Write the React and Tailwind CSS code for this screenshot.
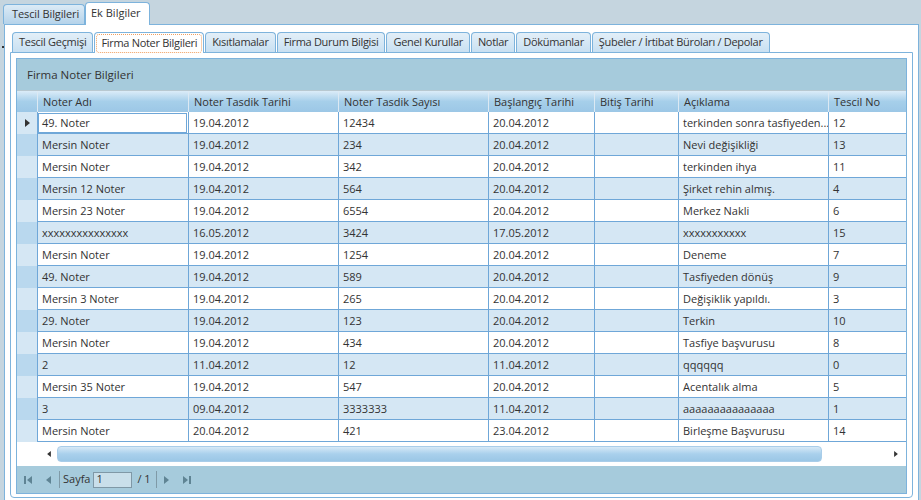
import React from "react";

const font = { fontFamily: "'Open Sans', 'Noto Sans', sans-serif" };

const columns = [
    { label: "Noter Adı", w: "w-[151px]" },
    { label: "Noter Tasdik Tarihi", w: "w-[150px]" },
    { label: "Noter Tasdik Sayısı", w: "w-[150px]" },
    { label: "Başlangıç Tarihi", w: "w-[106px]" },
    { label: "Bitiş Tarihi", w: "w-[84px]" },
    { label: "Açıklama", w: "w-[150px]" },
    { label: "Tescil No", w: "w-[78px]" },
];

const rows = [
    ["49. Noter", "19.04.2012", "12434", "20.04.2012", "", "terkinden sonra tasfiyeden...", "12"],
    ["Mersin Noter", "19.04.2012", "234", "20.04.2012", "", "Nevi değişikliği", "13"],
    ["Mersin Noter", "19.04.2012", "342", "20.04.2012", "", "terkinden ihya", "11"],
    ["Mersin 12 Noter", "19.04.2012", "564", "20.04.2012", "", "Şirket rehin almış.", "4"],
    ["Mersin 23 Noter", "19.04.2012", "6554", "20.04.2012", "", "Merkez Nakli", "6"],
    ["xxxxxxxxxxxxxxx", "16.05.2012", "3424", "17.05.2012", "", "xxxxxxxxxxx", "15"],
    ["Mersin Noter", "19.04.2012", "1254", "20.04.2012", "", "Deneme", "7"],
    ["49. Noter", "19.04.2012", "589", "20.04.2012", "", "Tasfiyeden dönüş", "9"],
    ["Mersin 3 Noter", "19.04.2012", "265", "20.04.2012", "", "Değişiklik yapıldı.", "3"],
    ["29. Noter", "19.04.2012", "123", "20.04.2012", "", "Terkin", "10"],
    ["Mersin Noter", "19.04.2012", "434", "20.04.2012", "", "Tasfiye başvurusu", "8"],
    ["2", "11.04.2012", "12", "11.04.2012", "", "qqqqqq", "0"],
    ["Mersin 35 Noter", "19.04.2012", "547", "20.04.2012", "", "Acentalık alma", "5"],
    ["3", "09.04.2012", "3333333", "11.04.2012", "", "aaaaaaaaaaaaaaa", "1"],
    ["Mersin Noter", "20.04.2012", "421", "23.04.2012", "", "Birleşme Başvurusu", "14"],
];

const innerTabs = [
    "Tescil Geçmişi",
    "Firma Noter Bilgileri",
    "Kısıtlamalar",
    "Firma Durum Bilgisi",
    "Genel Kurullar",
    "Notlar",
    "Dökümanlar",
    "Şubeler / İrtibat Büroları / Depolar",
];

function Tri({ dir = "right", className = "" }) {
    const d = dir === "right" ? "M0 0 L5 4 L0 8 Z" : "M5 0 L0 4 L5 8 Z";
    return (
        <svg width="5" height="8" viewBox="0 0 5 8" className={className}>
            <path d={d} fill="currentColor" />
        </svg>
    );
}

function PagerIcon({ kind }) {
    return (
        <svg width="9" height="10" viewBox="0 0 9 10" className="text-[#5f8494]">
            {kind === "first" && <><rect x="0" y="1" width="2" height="8" fill="currentColor" /><path d="M8 1 L3 5 L8 9 Z" fill="currentColor" /></>}
            {kind === "prev" && <path d="M7 1 L2 5 L7 9 Z" fill="currentColor" />}
            {kind === "next" && <path d="M2 1 L7 5 L2 9 Z" fill="currentColor" />}
            {kind === "last" && <><path d="M1 1 L6 5 L1 9 Z" fill="currentColor" /><rect x="7" y="1" width="2" height="8" fill="currentColor" /></>}
        </svg>
    );
}

export default function App() {
    return (
        <div
            className="w-[921px] h-[500px] bg-[#c5d5df] overflow-hidden flex flex-col text-[#333] text-[11px]"
            style={font}
        >
            {/* outer tabs */}
            <div className="h-[24px] flex items-end pl-[3px] shrink-0">
                <div className="h-[20px] w-[82px] flex items-center pl-[8px] rounded-t-[4px] border border-b-0 border-[#7db3dc] bg-gradient-to-b from-[#dcebf6] to-[#b5d3ea] whitespace-nowrap tracking-[-0.1px]">
                    Tescil Bilgileri
                </div>
                <div className="h-[23px] w-[65px] -mb-px relative z-10 flex items-center pl-[5px] pb-[2px] rounded-t-[4px] border border-b-0 border-[#7db3dc] bg-white whitespace-nowrap">
                    Ek Bilgiler
                </div>
            </div>

            {/* outer panel */}
            <div className="ml-[4px] mr-[2px] flex-1 border border-b-0 border-[#7db3dc] bg-white pl-[5px] pr-[5px] pt-[7px] flex flex-col relative">
                <span className="absolute left-[-3px] top-[21px] w-[2px] h-[2px] bg-[#333]" />
                {/* inner tabs */}
                <div className="flex items-end pl-[2px] gap-px h-[20px] tracking-[-0.3px] whitespace-nowrap">
                    {innerTabs.map((t, i) =>
                        i === 1 ? (
                            <div
                                key={t}
                                className="h-[21px] -mb-px relative z-10 rounded-t-[4px] border border-b-0 border-[#7db3dc] bg-white p-[1px] pb-0"
                            >
                                <div className="h-full px-[4px] flex items-center border border-dotted border-[#f0a060] rounded-[3px]">
                                    {t}
                                </div>
                            </div>
                        ) : (
                            <div
                                key={t}
                                className="h-[20px] px-[6px] flex items-center rounded-t-[4px] border border-b-0 border-[#7db3dc] bg-gradient-to-b from-[#e3eff8] to-[#c8e0f2]"
                            >
                                {t}
                            </div>
                        )
                    )}
                </div>

                {/* inner panel */}
                <div className="w-[903px] h-[446px] border border-[#7db3dc] rounded-b-[4px] bg-white p-[5px] pb-[3px]">
                    <div className="h-full border border-[#7db3dc] flex flex-col">
                        <div className="h-[32px] shrink-0 bg-[#a6cbdc] border-b border-[#b8c8d0] flex items-center pl-[10px] text-[11.5px]">
                            Firma Noter Bilgileri
                        </div>

                        {/* column header */}
                        <div className="h-[21px] shrink-0 flex bg-gradient-to-b from-[#dbecf8] via-[#a6cfea] to-[#9cc7e6]">
                            <div className="w-[20px] h-full" />
                            {columns.map((c) => (
                                <div
                                    key={c.label}
                                    className={`${c.w} h-full border-l border-[#dce9f3] flex items-center pl-[5px] pt-[1px]`}
                                >
                                    {c.label}
                                </div>
                            ))}
                        </div>

                        {/* rows */}
                        {rows.map((r, ri) => {
                            const alt = ri % 2 === 1;
                            return (
                                <div key={ri} className={`h-[22px] shrink-0 flex ${alt ? "bg-[#d5e7f4]" : "bg-white"}`}>
                                    <div
                                        className={`w-[20px] h-full flex items-center justify-center text-[#333] ${
                                            alt ? "bg-[#b9d8ee]" : "bg-[#d5e7f4]"
                                        }`}
                                    >
                                        {ri === 0 && <Tri />}
                                    </div>
                                    {r.map((v, ci) => (
                                        <div
                                            key={ci}
                                            className={`${columns[ci].w} h-full border-l border-b border-[#6fa7d8] flex items-center pl-[4px] pt-[1px] whitespace-nowrap overflow-hidden ${
                                                ri === 0 && ci === 0 ? "outline outline-1 -outline-offset-2 outline-[#6fa7d8]" : ""
                                            }`}
                                        >
                                            {v}
                                        </div>
                                    ))}
                                </div>
                            );
                        })}

                        {/* horizontal scrollbar */}
                        <div className="h-[24px] shrink-0 flex items-center bg-white">
                            <div className="w-[40px] flex justify-end pr-[6px] text-[#333]">
                                <Tri dir="left" className="w-[4px] h-[6px]" />
                            </div>
                            <div className="w-[765px] h-[16px] rounded-[4px] border border-[#a9cde9] bg-gradient-to-b from-[#d6e9f7] via-[#a9d0ec] to-[#9bc7e6]" />
                            <div className="flex-1 flex justify-end pr-[8px] text-[#333]">
                                <Tri className="w-[4px] h-[6px]" />
                            </div>
                        </div>

                        {/* pager */}
                        <div className="flex-1 bg-[#a6cbdc] flex items-center pl-[1px]">
                            <div className="w-[20px] flex justify-center"><PagerIcon kind="first" /></div>
                            <div className="w-[20px] flex justify-center"><PagerIcon kind="prev" /></div>
                            <div className="w-px h-[17px] bg-[#7f9aa7] ml-[1px] mr-[3px]" />
                            <span>Sayfa</span>
                            <div className="ml-[3px] w-[39px] h-[16px] border border-[#7f98a6] bg-[#c9dfea] flex items-center pl-[2px]">
                                1
                            </div>
                            <span className="ml-[5px]">/ 1</span>
                            <div className="w-px h-[17px] bg-[#7f9aa7] ml-[5px]" />
                            <div className="w-[20px] flex justify-center"><PagerIcon kind="next" /></div>
                            <div className="w-[20px] flex justify-center"><PagerIcon kind="last" /></div>
                        </div>
                    </div>
                </div>
            </div>
        </div>
    );
}
